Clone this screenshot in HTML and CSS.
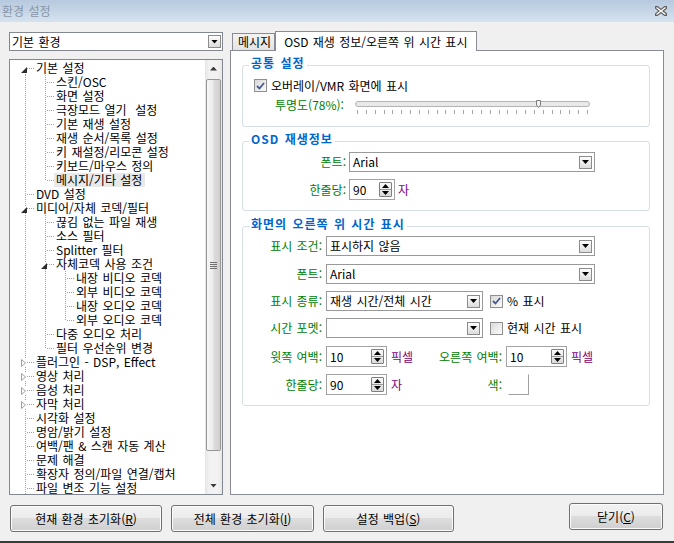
FILE: index.html
```html
<!DOCTYPE html>
<html lang="ko">
<head>
<meta charset="utf-8">
<title>환경 설정</title>
<link rel="stylesheet" href="styles.css">
</head>
<body>
<div class="window">
  <div class="titlebar">
    <span class="ttl">환경 설정</span>
    <svg class="close" width="12" height="10" viewBox="0 0 12 10"><path d="M1.5 1.5L10.5 8.5M10.5 1.5L1.5 8.5" stroke="#5d5d5d" stroke-width="3.6" stroke-linecap="square"/><path d="M1.5 1.5L10.5 8.5M10.5 1.5L1.5 8.5" stroke="#ffffff" stroke-width="1.4"/></svg>
  </div>
  <div class="main">
    <div class="left">
      <div class="combo lcombo"><span class="cv">기본 환경</span><span class="dd"></span></div>
      <div class="tree">
        <div class="tlist">
          <div class="row"><span class="n first"><span class="exp ex"><svg width="6" height="6" viewBox="0 0 6 6"><path d="M6 0V6H0Z" fill="#2b2b2b"/></svg></span></span><span class="t">기본 설정</span></div>
          <div class="row"><span class="g on"></span><span class="n"></span><span class="t">스킨/OSC</span></div>
          <div class="row"><span class="g on"></span><span class="n"></span><span class="t">화면 설정</span></div>
          <div class="row"><span class="g on"></span><span class="n"></span><span class="t">극장모드 열기&nbsp; 설정</span></div>
          <div class="row"><span class="g on"></span><span class="n"></span><span class="t">기본 재생 설정</span></div>
          <div class="row"><span class="g on"></span><span class="n"></span><span class="t">재생 순서/목록 설정</span></div>
          <div class="row"><span class="g on"></span><span class="n"></span><span class="t">키 재설정/리모콘 설정</span></div>
          <div class="row"><span class="g on"></span><span class="n"></span><span class="t">키보드/마우스 정의</span></div>
          <div class="row"><span class="g on"></span><span class="n last"></span><span class="t sel">메시지/기타 설정</span></div>
          <div class="row"><span class="n"></span><span class="t">DVD 설정</span></div>
          <div class="row"><span class="n"><span class="exp ex"><svg width="6" height="6" viewBox="0 0 6 6"><path d="M6 0V6H0Z" fill="#2b2b2b"/></svg></span></span><span class="t">미디어/자체 코덱/필터</span></div>
          <div class="row"><span class="g on"></span><span class="n"></span><span class="t">끊김 없는 파일 재생</span></div>
          <div class="row"><span class="g on"></span><span class="n"></span><span class="t">소스 필터</span></div>
          <div class="row"><span class="g on"></span><span class="n"></span><span class="t">Splitter 필터</span></div>
          <div class="row"><span class="g on"></span><span class="n"><span class="exp ex"><svg width="6" height="6" viewBox="0 0 6 6"><path d="M6 0V6H0Z" fill="#2b2b2b"/></svg></span></span><span class="t">자체코덱 사용 조건</span></div>
          <div class="row"><span class="g on"></span><span class="g on"></span><span class="n"></span><span class="t">내장 비디오 코덱</span></div>
          <div class="row"><span class="g on"></span><span class="g on"></span><span class="n"></span><span class="t">외부 비디오 코덱</span></div>
          <div class="row"><span class="g on"></span><span class="g on"></span><span class="n"></span><span class="t">내장 오디오 코덱</span></div>
          <div class="row"><span class="g on"></span><span class="g on"></span><span class="n last"></span><span class="t">외부 오디오 코덱</span></div>
          <div class="row"><span class="g on"></span><span class="n"></span><span class="t">다중 오디오 처리</span></div>
          <div class="row"><span class="g on"></span><span class="n last"></span><span class="t">필터 우선순위 변경</span></div>
          <div class="row"><span class="n"><span class="exp co"><svg width="5" height="8" viewBox="0 0 5 8"><path d="M.5 .5L4.5 4L.5 7.5Z" fill="#fff" stroke="#a0a0a0"/></svg></span></span><span class="t">플러그인 - DSP, Effect</span></div>
          <div class="row"><span class="n"><span class="exp co"><svg width="5" height="8" viewBox="0 0 5 8"><path d="M.5 .5L4.5 4L.5 7.5Z" fill="#fff" stroke="#a0a0a0"/></svg></span></span><span class="t">영상 처리</span></div>
          <div class="row"><span class="n"><span class="exp co"><svg width="5" height="8" viewBox="0 0 5 8"><path d="M.5 .5L4.5 4L.5 7.5Z" fill="#fff" stroke="#a0a0a0"/></svg></span></span><span class="t">음성 처리</span></div>
          <div class="row"><span class="n"><span class="exp co"><svg width="5" height="8" viewBox="0 0 5 8"><path d="M.5 .5L4.5 4L.5 7.5Z" fill="#fff" stroke="#a0a0a0"/></svg></span></span><span class="t">자막 처리</span></div>
          <div class="row"><span class="n"></span><span class="t">시각화 설정</span></div>
          <div class="row"><span class="n"></span><span class="t">명암/밝기 설정</span></div>
          <div class="row"><span class="n"></span><span class="t">여백/팬 &amp; 스캔 자동 계산</span></div>
          <div class="row"><span class="n"></span><span class="t">문제 해결</span></div>
          <div class="row"><span class="n"></span><span class="t">확장자 정의/파일 연결/캡처</span></div>
          <div class="row"><span class="n"></span><span class="t">파일 변조 기능 설정</span></div>
        </div>
        <div class="vscroll">
          <div class="sarrow up"></div>
          <div class="strack"><div class="thumb"><span class="grip"></span></div></div>
          <div class="sarrow down"></div>
        </div>
      </div>
    </div>
    <div class="right">
      <div class="tabs">
        <div class="tab">메시지</div>
        <div class="tab active">OSD 재생 정보/오른쪽 위 시간 표시</div>
      </div>
      <div class="panel">
        <div class="group g1">
          <div class="gtitle">공통 설정</div>
          <div class="chkrow">
            <span class="chk"><svg width="9" height="8" viewBox="0 0 9 8"><path d="M1 4L3.5 6.5L8 1" fill="none" stroke="#4a5a8c" stroke-width="1.8"/></svg></span>
            <span class="clbl">오버레이/VMR 화면에 표시</span>
          </div>
          <div class="sliderrow">
            <span class="slabel">투명도(78%):</span>
            <div class="slider">
              <div class="track"></div>
              <span class="sthumb" style="left:78%"><svg width="5" height="8" viewBox="0 0 5 8"><path d="M.5 .5H4.5V5L2.5 7.5L.5 5Z" fill="#f3f3f3" stroke="#7c7c7c"/></svg></span>
              <div class="ticks"><i></i><i></i><i></i><i></i><i></i><i></i><i></i><i></i><i></i><i></i><i></i><i></i><i></i><i></i><i></i><i></i><i></i><i></i><i></i><i></i><i></i><i></i><i></i><i></i><i></i><i></i><i></i></div>
            </div>
          </div>
        </div>

        <div class="group g2">
          <div class="gtitle">OSD 재생정보</div>
          <div class="form f2">
            <span class="lbl">폰트:</span>
            <div class="combo w246"><span class="cv">Arial</span><span class="dd"></span></div>
            <span class="lbl h21">한줄당:</span>
            <div class="ctl"><div class="spin w46"><span class="v">90</span><span class="sb"><i class="u"></i><i class="d"></i></span></div><span class="unit">자</span></div>
          </div>
        </div>

        <div class="group g3">
          <div class="gtitle">화면의 오른쪽 위 시간 표시</div>
          <div class="form f3">
            <span class="lbl">표시 조건:</span>
            <div class="combo w269"><span class="cv">표시하지 않음</span><span class="dd"></span></div>
            <span class="lbl">폰트:</span>
            <div class="combo w269"><span class="cv">Arial</span><span class="dd"></span></div>
            <span class="lbl">표시 종류:</span>
            <div class="ctl">
              <div class="combo w157"><span class="cv">재생 시간/전체 시간</span><span class="dd"></span></div>
              <span class="chk cm"><svg width="9" height="8" viewBox="0 0 9 8"><path d="M1 4L3.5 6.5L8 1" fill="none" stroke="#4a5a8c" stroke-width="1.8"/></svg></span>
              <span class="clbl">% 표시</span>
            </div>
            <span class="lbl">시간 포멧:</span>
            <div class="ctl">
              <div class="combo w157"><span class="cv"></span><span class="dd"></span></div>
              <span class="chk cm"></span>
              <span class="clbl">현재 시간 표시</span>
            </div>
            <span class="lbl h21">윗쪽 여백:</span>
            <div class="ctl">
              <div class="spin w61"><span class="v">10</span><span class="sb"><i class="u"></i><i class="d"></i></span></div>
              <span class="unit uw">픽셀</span>
              <span class="lbl l2">오른쪽 여백:</span>
              <div class="spin w61 sp2"><span class="v">10</span><span class="sb"><i class="u"></i><i class="d"></i></span></div>
              <span class="unit">픽셀</span>
            </div>
            <span class="lbl h21">한줄당:</span>
            <div class="ctl">
              <div class="spin w61"><span class="v">90</span><span class="sb"><i class="u"></i><i class="d"></i></span></div>
              <span class="unit uw">자</span>
              <span class="lbl l2">색:</span>
              <span class="colorbox"></span>
            </div>
          </div>
        </div>
      </div>
    </div>
  </div>
  <div class="footer">
    <div class="btn b1">현재 환경 초기화(<u>R</u>)</div>
    <div class="btn b2">전체 환경 초기화(<u>I</u>)</div>
    <div class="btn b3">설정 백업(<u>S</u>)</div>
    <div class="btn bc">닫기(<u>C</u>)</div>
  </div>
</div>
</body>
</html>
```

FILE: styles.css
```css
* { box-sizing: border-box; }

body {
  margin: 0;
  font-family: "Noto Sans CJK KR", "Noto Sans", sans-serif;
  font-size: 12px;
  letter-spacing: 0;
  word-spacing: 1px;
  color: #000;
}

.window {
  width: 674px;
  height: 543px;
  background: #f0f0f0;
  display: flex;
  flex-direction: column;
  border-bottom: 2px solid #3b3b3b;
  overflow: hidden;
}

/* title bar */
.titlebar {
  height: 22px;
  flex: none;
  display: flex;
  align-items: center;
  padding-left: 2px;
  background: linear-gradient(#b7c9de, #d6e2ef);
  color: #8796a8;
  line-height: 14px;
}
.close { margin-left: auto; margin-right: 7px; }

/* main area */
.main {
  height: 473px;
  flex: none;
  display: flex;
  padding: 9px 0 0 9px;
}
.left {
  width: 214px;
  flex: none;
  display: flex;
  flex-direction: column;
}

/* combo boxes */
.combo {
  display: flex;
  align-items: center;
  height: 20px;
  background: #fff;
  border: 1px solid #999;
  padding-left: 3px;
  line-height: 14px;
}
.cv { flex: 1; white-space: nowrap; }
.dd {
  flex: none;
  width: 13px;
  height: 13px;
  margin-right: 2px;
  border: 1px solid #8b8b8b;
  background: linear-gradient(#fdfdfd, #dcdcdc);
  display: flex;
  align-items: center;
  justify-content: center;
}
.dd::after {
  content: "";
  width: 7px;
  height: 4px;
  background: #000;
  clip-path: polygon(0 0, 100% 0, 50% 100%);
}
.lcombo {
  margin-top: 1px;
  height: 19px;
  border-color: #828790;
  padding-left: 2px;
}
.lcombo .dd { margin-right: 1px; }

/* tree */
.tree {
  margin-top: 8px;
  height: 436px;
  border: 1px solid #828790;
  background: #fff;
  display: flex;
}
.tlist {
  flex: 1;
  overflow: hidden;
  padding-top: 1px;
}
.row {
  display: flex;
  height: 14px;
  line-height: 14px;
  white-space: nowrap;
}
.g, .n { flex: none; position: relative; }
.g { width: 20px; }
.n { width: 24px; }
.g.on::before, .n::before {
  content: "";
  position: absolute;
  left: 15px;
  top: 0;
  bottom: 0;
  width: 1px;
  background: repeating-linear-gradient(#a0a0a0 0 1px, transparent 1px 2px);
}
.n.last::before { bottom: auto; height: 8px; }
.n.first::before { top: 7px; }
.n::after {
  content: "";
  position: absolute;
  left: 17px;
  top: 7px;
  width: 7px;
  height: 1px;
  background: repeating-linear-gradient(90deg, #a0a0a0 0 1px, transparent 1px 2px);
}
.exp {
  position: absolute;
  z-index: 1;
  line-height: 0;
  background: #fff;
}
.exp.ex { left: 11px; top: 6px; }
.exp.co { left: 11px; top: 4px; }
.t { padding: 0 3px 0 2px; }
.t.sel { background: #e9e9e9; }

/* scrollbar */
.vscroll {
  width: 17px;
  flex: none;
  display: flex;
  flex-direction: column;
  background: linear-gradient(90deg, #e4e4e4, #f2f2f2 25%, #f2f2f2 75%, #e8e8e8);
}
.sarrow {
  height: 17px;
  flex: none;
  display: flex;
  align-items: center;
  justify-content: center;
}
.sarrow::after {
  content: "";
  width: 7px;
  height: 4px;
  background: #3a3a3a;
}
.sarrow.up::after { clip-path: polygon(50% 0, 100% 100%, 0 100%); }
.sarrow.down::after { clip-path: polygon(0 0, 100% 0, 50% 100%); }
.strack { flex: 1; padding-top: 2px; }
.thumb {
  margin: 0 1px;
  height: 372px;
  border: 1px solid #979797;
  border-radius: 2px;
  background: linear-gradient(90deg, #f7f7f7, #ececec 45%, #dcdcdc 55%, #d0d0d0);
  display: flex;
  align-items: center;
  justify-content: center;
}
.grip {
  width: 7px;
  height: 7px;
  background: repeating-linear-gradient(#707070 0 1px, transparent 1px 2px);
}

/* right side */
.right {
  width: 434px;
  flex: none;
  margin-left: 7px;
  display: flex;
  flex-direction: column;
}
.tabs {
  height: 20px;
  flex: none;
  display: flex;
  align-items: flex-end;
  padding-left: 2px;
}
.tab {
  height: 17px;
  margin-bottom: 1px;
  border: 1px solid #898c95;
  border-bottom: none;
  background: linear-gradient(#f3f3f3, #e3e3e3);
  padding: 0 3px 0 5px;
  line-height: 16px;
  white-space: nowrap;
}
.tab.active {
  height: 20px;
  margin-bottom: 0;
  background: #fff;
  position: relative;
  z-index: 1;
  padding: 0 9px 0 8px;
  line-height: 19px;
}
.panel {
  margin-top: -1px;
  height: 445px;
  border: 1px solid #898c95;
  background: #fff;
  padding: 14px 13px 0 11px;
}

/* group boxes */
.group {
  position: relative;
  border: 1px solid #d5dfe5;
  border-radius: 3px;
}
.gtitle {
  position: absolute;
  top: -10px;
  left: 6px;
  padding: 0 2px;
  background: #fff;
  color: #0066cc;
  font-weight: bold;
  line-height: 14px;
  letter-spacing: 1px;
  word-spacing: 1px;
  white-space: nowrap;
}
.g1 { height: 62px; padding: 13px 0 0 11px; }
.g2 { height: 70px; margin-top: 14px; }
.g3 { height: 180px; margin-top: 15px; }

.chkrow {
  display: flex;
  align-items: center;
  height: 13px;
}
.chk {
  flex: none;
  width: 13px;
  height: 13px;
  border: 1px solid #8e8f8f;
  background: linear-gradient(135deg, #d9d9d9, #fbfbfb);
  display: flex;
  align-items: center;
  justify-content: center;
}
.clbl { margin-left: 4px; line-height: 14px; white-space: nowrap; }
.chk.cm { margin-left: 7px; }

.sliderrow {
  display: flex;
  margin-top: 6px;
  padding-left: 21px;
}
.slabel {
  width: 80px;
  flex: none;
  color: #008000;
  line-height: 14px;
  white-space: nowrap;
}
.slider {
  position: relative;
  width: 235px;
  padding-top: 3px;
}
.track {
  height: 6px;
  border: 1px solid #b3b3b3;
  border-radius: 3px;
  background: #e8eaea;
}
.sthumb {
  position: absolute;
  top: 2px;
  margin-left: -2px;
  line-height: 0;
}
.ticks {
  width: 231px;
  height: 4px;
  margin: 3px 0 0 2px;
  display: flex;
  justify-content: space-between;
}
.ticks i { width: 1px; height: 4px; background: #a4a4a4; }

/* forms */
.form { display: grid; align-items: start; }
.f2 {
  grid-template-columns: 103px 1fr;
  grid-template-rows: 27px 21px;
  column-gap: 3px;
  padding-top: 10px;
}
.f3 {
  grid-template-columns: 79px 1fr;
  grid-template-rows: 28px 27px 27px 28px 28px 21px;
  column-gap: 4px;
  padding-top: 9px;
}
.lbl {
  color: #008000;
  text-align: right;
  line-height: 20px;
  white-space: nowrap;
}
.lbl.h21 { line-height: 21px; }
.ctl { display: flex; align-items: center; }
.w246 { width: 246px; }
.w269 { width: 269px; }
.w157 { width: 157px; flex: none; }

.spin {
  flex: none;
  display: flex;
  align-items: center;
  height: 21px;
  border: 1px solid #a3a3a3;
  background: #fff;
  padding-left: 3px;
  line-height: 14px;
}
.w46 { width: 46px; }
.w61 { width: 61px; }
.spin .v { flex: 1; }
.sb {
  flex: none;
  width: 13px;
  height: 15px;
  margin-right: 2px;
  display: flex;
  flex-direction: column;
  border: 1px solid #7f7f7f;
  border-radius: 1px;
  background: linear-gradient(#fafafa, #dadada);
}
.sb i {
  flex: 1;
  display: flex;
  align-items: center;
  justify-content: center;
}
.sb i::after {
  content: "";
  width: 7px;
  height: 4px;
  background: #000;
}
.sb i.u::after { clip-path: polygon(50% 0, 100% 100%, 0 100%); }
.sb i.d { border-top: 1px solid #9a9a9a; }
.sb i.d::after { clip-path: polygon(0 0, 100% 0, 50% 100%); }

.unit {
  color: #800080;
  margin-left: 4px;
  line-height: 20px;
  white-space: nowrap;
}
.f2 .unit { margin-left: 3px; }
.unit.uw { width: 39px; flex: none; }
.lbl.l2 { width: 72px; flex: none; line-height: 21px; }
.sp2 { margin-left: 4px; }
.colorbox {
  width: 21px;
  height: 21px;
  margin-left: 6px;
  border: 1px solid;
  border-color: #fff #a0a0a0 #a0a0a0 #fff;
}

/* footer buttons */
.footer {
  flex: 1;
  display: flex;
  align-items: flex-start;
  padding: 8px 11px 0 10px;
}
.btn {
  height: 27px;
  margin-top: 2px;
  border: 1px solid #707070;
  border-radius: 3px;
  background: linear-gradient(#f2f2f2, #ebebeb 50%, #dddddd 50%, #cfcfcf);
  box-shadow: inset 0 0 0 1px #fbfbfb;
  display: flex;
  align-items: center;
  justify-content: center;
  white-space: nowrap;
  line-height: 14px;
}
.b1 { width: 152px; }
.b2 { width: 143px; margin-left: 9px; }
.b3 { width: 131px; margin-left: 9px; }
.bc { width: 94px; margin-left: auto; margin-top: 0; }
```
